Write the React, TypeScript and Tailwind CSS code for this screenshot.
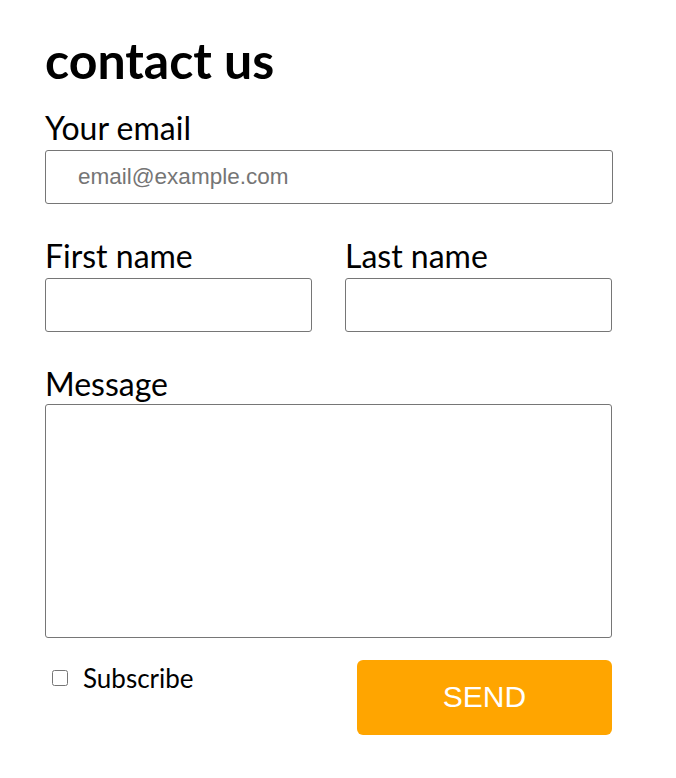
export default function App() {
  const label = "block text-[32px] leading-[36px] text-black";
  const input = "block w-full h-[54px] rounded-[3px] border border-[#767676] bg-white outline-none";

  return (
    <div className="min-h-screen bg-white" style={{ fontFamily: "Lato, 'Noto Sans', sans-serif" }}>
      <form className="w-[568px] ml-[45px] pt-[30px]" onSubmit={(e) => e.preventDefault()}>
        <h1 className="text-[50px] leading-[60px] font-bold text-black">contact us</h1>

        <label className={`${label} mt-[20px]`}>Your email</label>
        <input
          type="email"
          placeholder="email@example.com"
          className={`${input} mt-[4px] pl-[32px] text-[22.5px] placeholder:text-[#757575]`}
          style={{ fontFamily: "'Liberation Sans', Arial, sans-serif" }}
        />

        <div className="grid grid-cols-2 gap-[33px] mt-[34px] w-[567px]">
          <div>
            <label className={label}>First name</label>
            <input type="text" className={`${input} mt-[4px]`} />
          </div>
          <div>
            <label className={label}>Last name</label>
            <input type="text" className={`${input} mt-[4px]`} />
          </div>
        </div>

        <label className={`${label} mt-[34px]`}>Message</label>
        <textarea className="block w-[567px] h-[234px] mt-[2px] rounded-[3px] border border-[#767676] resize-none outline-none" />

        <div className="flex items-start justify-between w-[567px] mt-[22px]">
          <label className="flex items-center gap-[15px] pl-[7px] pt-[3px] text-[26px] leading-[30px]">
            <input type="checkbox" className="w-[16px] h-[16px] rounded-[3px] accent-[#767676]" />
            Subscribe
          </label>
          <button
            type="submit"
            className="w-[255px] h-[75px] rounded-[6px] bg-[#ffa500] text-white text-[30px] pb-[2px]"
            style={{ fontFamily: "'Liberation Sans', Arial, sans-serif" }}
          >
            SEND
          </button>
        </div>
      </form>
    </div>
  );
}
